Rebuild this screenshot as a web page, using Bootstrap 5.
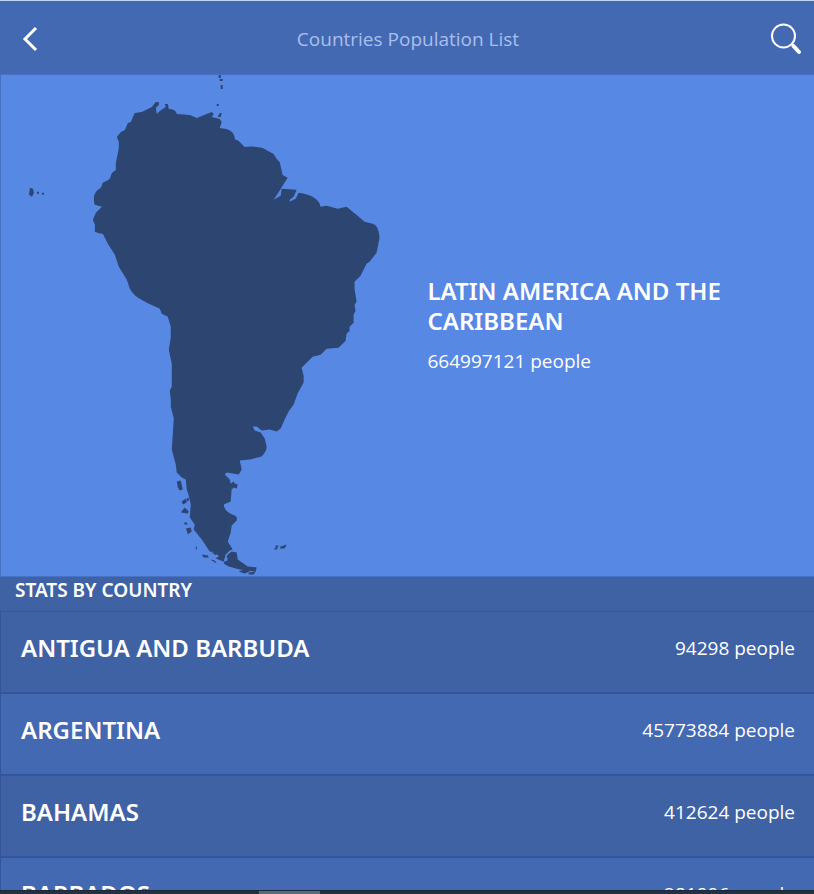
<!DOCTYPE html>
<html lang="en">
<head>
<meta charset="utf-8">
<meta name="viewport" content="width=device-width, initial-scale=1">
<title>Countries Population List</title>
<link href="https://cdn.jsdelivr.net/npm/bootstrap@5.3.0/dist/css/bootstrap.min.css" rel="stylesheet">
<style>
body { font-family: "Open Sans", "Noto Sans", sans-serif; font-size: 19px; line-height: 30px; background: #4369b2; color: #fff; border-top: 1px solid #bcd5f5; }
h2, h3 { font-family: "Noto Sans", "Open Sans", sans-serif; font-size: 24px; line-height: 30px; font-weight: 600; }
.top-bar { height: 73px; padding: 2px 12px 0 18px; }
.top-bar h1 { font-size: 19px; line-height: 30px; font-weight: 400; color: #a9bfee; }
.icon-btn { color: #fff; line-height: 1; }
.hero { background: #5788e4; border: 1px solid #4771c4; border-right: 0; }
.hero svg { color: #2c4571; }
.hero-text { padding: 0 20px; }
.hero-text p { padding-top: 10px; }
.stats-title { background: #3e62a4; font-size: 19px; line-height: 26px; font-weight: 600; padding: 0 15px 8px; }
.country { background: #4369b2; border: 1px solid #35559a; border-right: 0; padding: 21px 19px 29px 20px; }
.country:nth-child(odd) { background: #3f62a5; }
.scroll-track { height: 4px; background: #213243; border-top: 1px solid #1c2938; }
.scroll-thumb { width: 61px; margin-left: 259px; background: #586a80; }
</style>
</head>
<body class="vh-100 d-flex flex-column overflow-hidden">
<header class="top-bar d-flex align-items-center justify-content-between flex-shrink-0">
  <button type="button" class="icon-btn btn p-0 border-0" aria-label="Back">
    <svg class="d-block" width="28" height="26" viewBox="0 0 28 26" fill="none" stroke="currentColor" stroke-width="3"><path d="M18 2 7 13 18 24"/></svg>
  </button>
  <h1 class="m-0">Countries Population List</h1>
  <button type="button" class="icon-btn btn p-0 border-0" aria-label="Search">
    <svg class="d-block" width="32" height="32" viewBox="0 0 32 32" fill="none" stroke="currentColor"><circle cx="13.500" cy="13" r="11.500" stroke-width="2"/><path d="m21.500 21 1.500 1.500" stroke-width="2"/><path d="m23.500 23 5.500 6" stroke-width="4" stroke-linecap="round"/></svg>
  </button>
</header>
<main class="flex-grow-1 overflow-hidden">
  <section class="hero">
    <div class="row g-0 align-items-center">
      <div class="col-6">
        <svg class="d-block w-100" viewBox="1 75 407 502" fill="currentColor" role="img" aria-label="Map of Latin America">
          <path d="M117 137 119 142 119 148 118 153 116 163 116 170 112 173 110 179 107 181 103 183 101 188 Q94 192 94 198 T95 205L102 207 96 213 93 220 95 225 95 232 Q99 234 103 234L108 244 115 255 119 267 127 280 130 289 Q134 296 140 299L147 303 160 309 162 314 168 317 171 327 171 338 169 350 172 364 172 387 170 391 171 400 171 407 174 419 172 450 176 465 177 473 182 478 186 480 187 490 189 496 191 505 190 518 195 525 194 530 202 540 210 552 219 553 222 556 221 561 224 562 226 555 230 551 233 550 228 542 231 533 232 526 237 521 Q238 517 235 516 224 512 224 505L231 502 232 488 230 480 225 475 227 473 239 475 242 470 240 461 250 460 262 457 Q267 452 267 447L265 439 261 433 255 431 253 427 257 427 262 431 270 430 277 432 281 429 285 420 289 412 294 405 298 394 304 383 304 376 302 368 313 357 321 355 327 349 339 348 346 341 347 334 350 331 350 327 354 323 354 315 356 311 355 305 357 302 355 289 355 282 361 276 367 264 370 262 377 253 380 238 Q379 225 373 224L365 222 358 216 347 207 338 209 327 206 321 207 Q319 196 299 193L296 199 290 202 290 200 294 197 297 190 282 189 281 196 274 200 278 194 288 178 283 175 280 162 277 159 274 154 263 148 Q254 146 245 147L239 141 235 139 Q235 129 220 128L222 122 220 119 212 117 214 114 212 112 197 118 190 115 177 114 Q176 109 169 109L168 104 165 104 166 107 160 111 157 114 156 108 159 105 159 102 156 102 152 107 142 112 135 113 133 117 131 122 128 123 125 130 121 132Z"/>
          <path d="M219 75h2v3h-2Zm1 4h3v2h-3Zm1 6h2v4h-2Zm-4 19h2v2h-2Zm3 9 2 0-1 4-3 0ZM30 188l3 1 1 4-2 4-3-2ZM37 192h2v2h-2Zm5 1h2v2h-2Z"/>
          <path d="m177 482 4-1 2 9-3 1-2-3Zm5 20 4-3 1 4-4 2Zm5-3 2-1v3l-2 1Zm-6 14 4-5 4 4-1 2Zm3 10 3 0 1 2-3 0Zm2 6 5-1 1 4-4 3-1-4Zm44-44 4-3 1 2 3 1-1 4-3-1-2 2Z"/>
          <path d="m196 547 1 0 0 3-1 0Zm6 8 6 1 1 2-5 0Zm9 5 4 1 2 3-5-3Zm1-7 7-1 4 4 1 6-8-3 2-2Zm12 11 4-9 4-3 5 1 1 7 10 7 9 1-1 4-16-2-11-3ZM239 572l8-3 3 3-5 2Zm10 1 7-1-2 3-5 0ZM276 546l3 0-2 4-3 0 2-2Zm5 1 6-2-2 4-5 0Z"/>
          <path d="m226 557 2 2-1 3-2-1Zm-12-1 4-1 1 2-2 1Z" fill="#5788e4"/>
        </svg>
      </div>
      <div class="col-6 hero-text">
        <h2 class="mb-0">LATIN AMERICA AND THE CARIBBEAN</h2>
        <p class="mb-0">664997121 people</p>
      </div>
    </div>
  </section>
  <section>
    <h2 class="stats-title m-0">STATS BY COUNTRY</h2>
    <ul class="list-unstyled m-0">
      <li class="country d-flex align-items-center justify-content-between"><h3 class="m-0">ANTIGUA AND BARBUDA</h3><span>94298 people</span></li>
      <li class="country d-flex align-items-center justify-content-between"><h3 class="m-0">ARGENTINA</h3><span>45773884 people</span></li>
      <li class="country d-flex align-items-center justify-content-between"><h3 class="m-0">BAHAMAS</h3><span>412624 people</span></li>
      <li class="country d-flex align-items-center justify-content-between"><h3 class="m-0">BARBADOS</h3><span>281996 people</span></li>
    </ul>
  </section>
</main>
<div class="scroll-track d-flex flex-shrink-0" aria-hidden="true"><div class="scroll-thumb"></div></div>
<script src="https://cdn.jsdelivr.net/npm/bootstrap@5.3.0/dist/js/bootstrap.bundle.min.js"></script>
</body>
</html>
